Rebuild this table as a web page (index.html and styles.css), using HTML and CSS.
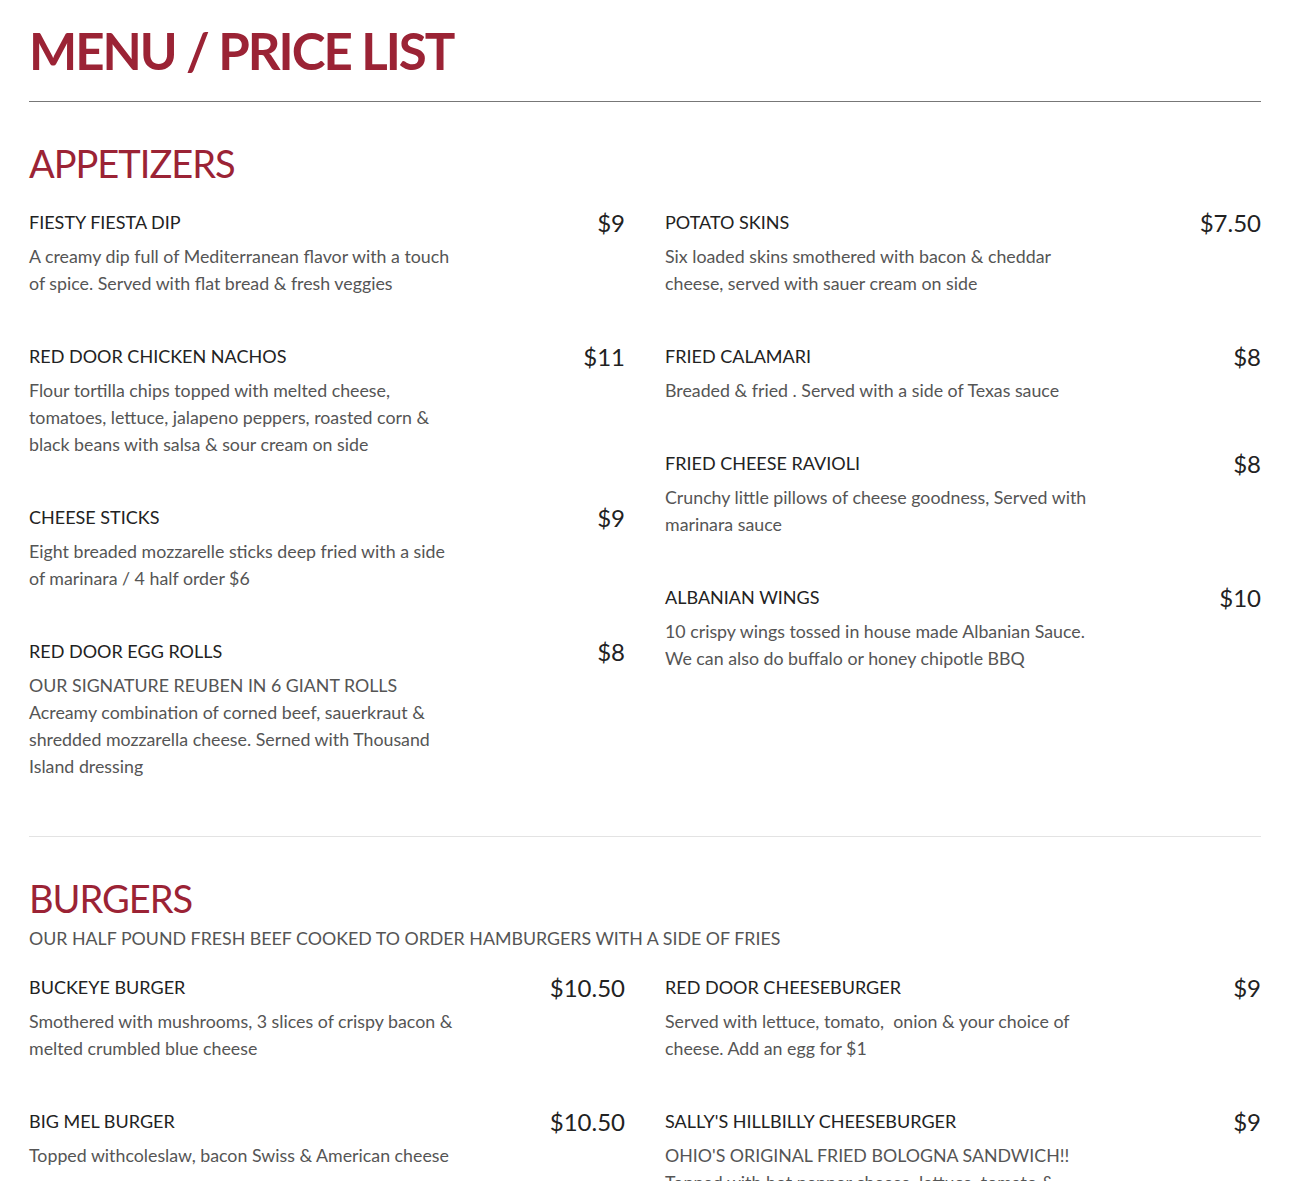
FILE: index.html
```html
<!DOCTYPE html>
<html>
<head>
<meta charset="utf-8">
<link rel="stylesheet" href="styles.css">
</head>
<body>
<div class="page">
  <h1 class="title">MENU / PRICE LIST</h1>
  <hr class="rule-dark">

  <section class="section">
    <h2 class="section-title">APPETIZERS</h2>
    <div class="cols">
      <div class="col">
        <div class="item">
          <div class="item-head"><span class="name">FIESTY FIESTA DIP</span><span class="price">$9</span></div>
          <p class="desc">A creamy dip full of Mediterranean flavor with a touch of spice. Served with flat bread &amp; fresh veggies</p>
        </div>
        <div class="item">
          <div class="item-head"><span class="name">RED DOOR CHICKEN NACHOS</span><span class="price">$11</span></div>
          <p class="desc">Flour tortilla chips topped with melted cheese, tomatoes, lettuce, jalapeno peppers, roasted corn &amp; black beans with salsa &amp; sour cream on side</p>
        </div>
        <div class="item">
          <div class="item-head"><span class="name">CHEESE STICKS</span><span class="price">$9</span></div>
          <p class="desc">Eight breaded mozzarelle sticks deep fried with a side of marinara / 4 half order $6</p>
        </div>
        <div class="item">
          <div class="item-head"><span class="name">RED DOOR EGG ROLLS</span><span class="price">$8</span></div>
          <p class="desc">OUR SIGNATURE REUBEN IN 6 GIANT ROLLS<br>Acreamy combination of corned beef, sauerkraut &amp; shredded mozzarella cheese. Serned with Thousand Island dressing</p>
        </div>
      </div>
      <div class="col">
        <div class="item">
          <div class="item-head"><span class="name">POTATO SKINS</span><span class="price">$7.50</span></div>
          <p class="desc">Six loaded skins smothered with bacon &amp; cheddar cheese, served with sauer cream on side</p>
        </div>
        <div class="item">
          <div class="item-head"><span class="name">FRIED CALAMARI</span><span class="price">$8</span></div>
          <p class="desc">Breaded &amp; fried . Served with a side of Texas sauce</p>
        </div>
        <div class="item">
          <div class="item-head"><span class="name">FRIED CHEESE RAVIOLI</span><span class="price">$8</span></div>
          <p class="desc">Crunchy little pillows of cheese goodness, Served with marinara sauce</p>
        </div>
        <div class="item">
          <div class="item-head"><span class="name">ALBANIAN WINGS</span><span class="price">$10</span></div>
          <p class="desc">10 crispy wings tossed in house made Albanian Sauce. We can also do buffalo or honey chipotle BBQ</p>
        </div>
      </div>
    </div>
  </section>

  <hr class="rule-light">

  <section class="section">
    <h2 class="section-title with-sub">BURGERS</h2>
    <p class="section-sub">OUR HALF POUND FRESH BEEF COOKED TO ORDER HAMBURGERS WITH A SIDE OF FRIES</p>
    <div class="cols">
      <div class="col">
        <div class="item">
          <div class="item-head"><span class="name">BUCKEYE BURGER</span><span class="price">$10.50</span></div>
          <p class="desc">Smothered with mushrooms, 3 slices of crispy bacon &amp; melted crumbled blue cheese</p>
        </div>
        <div class="item">
          <div class="item-head"><span class="name">BIG MEL BURGER</span><span class="price">$10.50</span></div>
          <p class="desc">Topped withcoleslaw, bacon Swiss &amp; American cheese</p>
        </div>
      </div>
      <div class="col">
        <div class="item">
          <div class="item-head"><span class="name">RED DOOR CHEESEBURGER</span><span class="price">$9</span></div>
          <p class="desc">Served with lettuce, tomato,&nbsp; onion &amp; your choice of cheese. Add an egg for $1</p>
        </div>
        <div class="item">
          <div class="item-head"><span class="name">SALLY'S HILLBILLY CHEESEBURGER</span><span class="price">$9</span></div>
          <p class="desc">OHIO'S ORIGINAL FRIED BOLOGNA SANDWICH!!<br>Topped with hot pepper cheese, lettuce, tomato &amp; onion on a toasted bun</p>
        </div>
      </div>
    </div>
  </section>
</div>
</body>
</html>
```

FILE: styles.css
```css
html, body {
  margin: 0;
  padding: 0;
  background: #ffffff;
}

body {
  font-family: Lato, "Open Sans", "Liberation Sans", sans-serif;
  color: #222222;
}

.page {
  padding: 20px 29px 0;
}

.title {
  margin: 0;
  font-family: Lato, "Liberation Sans", sans-serif;
  font-weight: 700;
  font-size: 51px;
  line-height: 62px;
  letter-spacing: -2px;
  color: #9b2335;
}

.rule-dark {
  margin: 19px 0 0;
  border: 0;
  height: 1px;
  background: #777777;
}

.rule-light {
  margin: 10px 0 0;
  border: 0;
  height: 1px;
  background: #e3e3e3;
}

.section {
  padding-top: 38px;
}

.section-title {
  margin: 0 0 22px;
  font-weight: 400;
  font-size: 38px;
  line-height: 47px;
  letter-spacing: -1px;
  color: #9b2335;
}

.section-title.with-sub {
  margin-bottom: 3px;
}

.section-sub {
  margin: 0 0 22px;
  font-size: 17.8px;
  line-height: 27px;
  color: #555555;
}

.cols {
  display: grid;
  grid-template-columns: 1fr 1fr;
  column-gap: 40px;
}

.col {
  display: flex;
  flex-direction: column;
}

.item {
  margin-bottom: 46px;
}

.item-head {
  display: flex;
  justify-content: space-between;
  align-items: flex-start;
  margin-bottom: 7px;
}

.name {
  font-size: 18px;
  line-height: 27px;
  color: #222222;
}

.price {
  font-size: 24px;
  line-height: 27px;
  color: #222222;
}

.desc {
  margin: 0;
  max-width: 430px;
  font-size: 17.8px;
  line-height: 27px;
  color: #555555;
}
```
